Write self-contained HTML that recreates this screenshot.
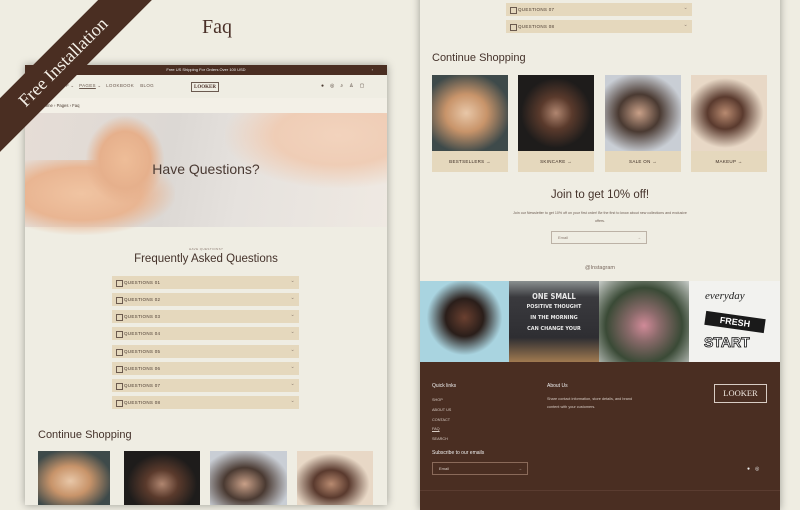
<!DOCTYPE html>
<html><head><meta charset="utf-8"><style>
*{margin:0;padding:0;box-sizing:border-box}
body{width:800px;height:500px;overflow:hidden;background:#efede2;font-family:"Liberation Sans",sans-serif;position:relative}
.a{position:absolute}
.serif{font-family:"Liberation Serif",serif}
.panel{position:absolute;background:#efede3;box-shadow:0 0 8px rgba(0,0,0,.35);overflow:hidden}
.q{position:absolute;height:13px;background:#e5d8bd;font-size:4.5px;color:#4a3a30;letter-spacing:.3px;line-height:13px;padding-left:12px}
.q:before{content:"";position:absolute;left:4px;top:3.5px;width:5px;height:5px;border:.6px solid #6b5a4e}
.q:after{content:"⌄";position:absolute;right:4px;top:-1px;font-size:5px;color:#8a7a6e}
.img{position:absolute}
.lab{position:absolute;background:#e5d8bd;font-size:4.5px;color:#3a2a22;text-align:center;letter-spacing:.3px}
.h{color:#45332b;font-family:"Liberation Sans",sans-serif;font-weight:normal}
</style></head><body>

<div class="a serif" style="left:202px;top:16px;font-size:20px;color:#4a3028">Faq</div>

<!-- LEFT PANEL -->
<div class="panel" style="left:25px;top:65px;width:362px;height:440px">
 <div class="a" style="left:0;top:0;width:362px;height:10px;background:#4a2e22;color:#eee;font-size:4px;text-align:center;line-height:10px">Free US Shipping For Orders Over 100 USD<span style="position:absolute;right:14px">›</span></div>
 <div class="a" style="left:0;top:10px;width:362px;height:23px;background:#efede3"></div>
 <div class="a" style="left:30px;top:18px;font-size:4.5px;color:#6b5a50;letter-spacing:.3px">SHOP ⌄ &nbsp; <u>PAGES</u> ⌄ &nbsp; LOOKBOOK &nbsp;&nbsp; BLOG</div>
 <div class="a serif" style="left:166px;top:17px;width:28px;height:10px;border:.7px solid #6b5a50;font-size:5px;font-weight:bold;text-align:center;line-height:9px;color:#4a3028">LOOKER</div>
 <div class="a" style="left:296px;top:18px;font-size:5px;color:#4a3a30;letter-spacing:6px">●◎⌕♙▢</div>
 <div class="a" style="left:0;top:33px;width:362px;height:15px;background:#f3f0e7"></div>
 <div class="a" style="left:13px;top:38px;font-size:4.2px;color:#4a3a30">⌂ Home › Pages › Faq</div>
 <div class="a" style="left:0;top:48px;width:362px;height:114px;background:linear-gradient(100deg,#e6ddd6 0%,#dcd8d4 40%,#e6e2de 60%,#efe9e2 100%)"></div>
 <div class="a" style="left:-20px;top:95px;width:170px;height:75px;background:radial-gradient(ellipse at 45% 45%,#f0c4a2 0%,#e9b592 45%,rgba(233,181,146,0) 72%)"></div>
 <div class="a" style="left:60px;top:50px;width:80px;height:90px;background:radial-gradient(ellipse at 50% 50%,#eebd98 0%,#e6b08c 45%,rgba(230,176,140,0) 70%)"></div>
 <div class="a" style="left:200px;top:48px;width:162px;height:75px;background:radial-gradient(ellipse at 70% 30%,#f2d3bd 0%,#efcdb6 40%,rgba(239,205,182,0) 72%)"></div>
 <div class="a h" style="left:0;top:96px;width:362px;text-align:center;font-size:14px;color:#4a3a33">Have Questions?</div>
 <div class="a" style="left:0;top:182px;width:362px;text-align:center;font-size:3px;color:#8a7a70;letter-spacing:.4px">HAVE QUESTIONS?</div>
 <div class="a h" style="left:0;top:188px;width:362px;text-align:center;font-size:11.5px">Frequently Asked Questions</div>
 <div class="q" style="left:87px;top:211px;width:187px">QUESTIONS 01</div>
 <div class="q" style="left:87px;top:228px;width:187px">QUESTIONS 02</div>
 <div class="q" style="left:87px;top:245px;width:187px">QUESTIONS 03</div>
 <div class="q" style="left:87px;top:262px;width:187px">QUESTIONS 04</div>
 <div class="q" style="left:87px;top:280px;width:187px">QUESTIONS 05</div>
 <div class="q" style="left:87px;top:297px;width:187px">QUESTIONS 06</div>
 <div class="q" style="left:87px;top:314px;width:187px">QUESTIONS 07</div>
 <div class="q" style="left:87px;top:331px;width:187px">QUESTIONS 08</div>
 <div class="a h" style="left:13px;top:364px;font-size:11px">Continue Shopping</div>
 <div class="img" style="left:13px;top:386px;width:72px;height:60px;background:radial-gradient(ellipse at 45% 50%,#e8c7a8 0%,#c8946a 35%,#3e4a4a 75%)"></div>
 <div class="img" style="left:99px;top:386px;width:76px;height:60px;background:radial-gradient(ellipse at 50% 55%,#b08670 0%,#5a3a2c 30%,#1e1c1b 65%)"></div>
 <div class="img" style="left:185px;top:386px;width:77px;height:60px;background:radial-gradient(ellipse at 45% 55%,#c9a088 0%,#4a3a32 35%,#c9ced5 75%)"></div>
 <div class="img" style="left:272px;top:386px;width:76px;height:60px;background:radial-gradient(ellipse at 45% 55%,#b88a70 0%,#5a3a2e 30%,#e8d8c6 65%)"></div>
</div>

<!-- RIGHT PANEL -->
<div class="panel" style="left:420px;top:-10px;width:360px;height:520px">
 <div class="q" style="left:86px;top:13px;width:186px">QUESTIONS 07</div>
 <div class="q" style="left:86px;top:30px;width:186px">QUESTIONS 08</div>
 <div class="a h" style="left:12px;top:62px;font-size:11px">Continue Shopping</div>
 <div class="img" style="left:12px;top:85px;width:76px;height:76px;background:radial-gradient(ellipse at 45% 50%,#e8c7a8 0%,#c8946a 35%,#3e4a4a 75%)"></div>
 <div class="img" style="left:98px;top:85px;width:76px;height:76px;background:radial-gradient(ellipse at 50% 50%,#b08670 0%,#5a3a2c 30%,#1e1c1b 65%)"></div>
 <div class="img" style="left:185px;top:85px;width:76px;height:76px;background:radial-gradient(ellipse at 45% 50%,#c9a088 0%,#4a3a32 35%,#c9ced5 75%)"></div>
 <div class="img" style="left:271px;top:85px;width:76px;height:76px;background:radial-gradient(ellipse at 45% 50%,#b88a70 0%,#5a3a2e 30%,#e8d8c6 65%)"></div>
 <div class="lab" style="left:12px;top:161px;width:76px;height:21px;line-height:21px">BESTSELLERS →</div>
 <div class="lab" style="left:98px;top:161px;width:76px;height:21px;line-height:21px">SKINCARE →</div>
 <div class="lab" style="left:185px;top:161px;width:76px;height:21px;line-height:21px">SALE ON →</div>
 <div class="lab" style="left:271px;top:161px;width:76px;height:21px;line-height:21px">MAKEUP →</div>
 <div class="a h" style="left:0;top:199px;width:360px;text-align:center;font-size:11.5px">Join to get 10% off!</div>
 <div class="a" style="left:90px;top:220px;width:180px;text-align:center;font-size:3.6px;line-height:7.5px;color:#6b5a50">Join our Newsletter to get 10% off on your first order! Be the first to know about new collections and exclusive offers.</div>
 <div class="a" style="left:131px;top:241px;width:96px;height:13px;border:.7px solid #bcb2a6;font-size:4px;color:#8a7a70;line-height:12px;padding-left:6px">Email<span style="position:absolute;right:5px">→</span></div>
 <div class="a" style="left:0;top:275px;width:360px;text-align:center;font-size:5.5px;color:#7a6a60">@Instagram</div>
 <div class="img" style="left:0;top:291px;width:89px;height:81px;background:radial-gradient(ellipse at 50% 45%,#6a4030 0%,#2a1e1a 30%,#a9d4e0 60%)"></div>
 <div class="img" style="left:89px;top:291px;width:90px;height:81px;background:linear-gradient(180deg,#8a9090 0%,#3a3a3e 20%,#2e2e32 70%,#a07a50 100%)"></div>
 <div class="a" style="left:104px;top:302px;width:60px;font-size:7.5px;line-height:9px;color:#e8e8e8;font-weight:bold;text-align:center;font-family:'DejaVu Sans Condensed',sans-serif">ONE SMALL<br><span style="font-size:5.5px">POSITIVE THOUGHT<br>IN THE MORNING<br>CAN CHANGE YOUR</span></div>
 <div class="img" style="left:179px;top:291px;width:90px;height:81px;background:radial-gradient(ellipse at 50% 55%,#d08a98 0%,#8a6a6a 25%,#3a4a36 60%,#c8ccc8 100%)"></div>
 <div class="img" style="left:269px;top:291px;width:91px;height:81px;background:#f2f2ef"></div>
 <div class="a" style="left:285px;top:300px;font-size:11px;font-style:italic;color:#222;font-family:'Liberation Serif',serif">everyday</div>
 <div class="a" style="left:285px;top:325px;width:60px;height:14px;background:#1a1a1a;color:#fff;font-size:9px;font-weight:bold;text-align:center;line-height:14px;transform:rotate(8deg)">FRESH</div>
 <div class="a" style="left:284px;top:344px;font-size:14px;font-weight:bold;color:#fff;-webkit-text-stroke:.8px #111">START</div>
 <div class="a" style="left:0;top:372px;width:360px;height:150px;background:#4a2e22"></div>
 <div class="a" style="left:12px;top:393px;font-size:5px;color:#eee">Quick links</div>
 <div class="a" style="left:12px;top:406px;font-size:3.8px;color:#d8ccc4;line-height:9.8px">SHOP<br>ABOUT US<br>CONTACT<br><u>FAQ</u><br>SEARCH</div>
 <div class="a" style="left:127px;top:393px;font-size:5px;color:#eee">About Us</div>
 <div class="a" style="left:127px;top:405px;font-size:3.8px;color:#d8ccc4;line-height:8px">Share contact information, store details, and brand<br>content with your customers.</div>
 <div class="a serif" style="left:294px;top:394px;width:53px;height:19px;border:.7px solid #d8ccc4;color:#f0e8e0;font-size:8.5px;text-align:center;line-height:17px">LOOKER</div>
 <div class="a" style="left:12px;top:460px;font-size:5px;color:#eee">Subscribe to our emails</div>
 <div class="a" style="left:12px;top:472px;width:96px;height:13px;border:.7px solid #8a6a5a;font-size:4px;color:#d8ccc4;line-height:12px;padding-left:6px">Email<span style="position:absolute;right:5px">→</span></div>
 <div class="a" style="left:327px;top:476px;font-size:5px;color:#eee;letter-spacing:5px">●◎</div>
 <div class="a" style="left:0;top:500px;width:360px;height:1px;background:#5a3c30"></div>
</div>

<!-- ribbon -->
<div class="a" style="left:-97px;top:43px;width:320px;height:38px;background:#4a2e22;transform:rotate(-45deg);color:#f4efe6;font-family:'Liberation Serif',serif;font-size:18px;text-align:center;line-height:38px">Free Installation</div>
</body></html>
